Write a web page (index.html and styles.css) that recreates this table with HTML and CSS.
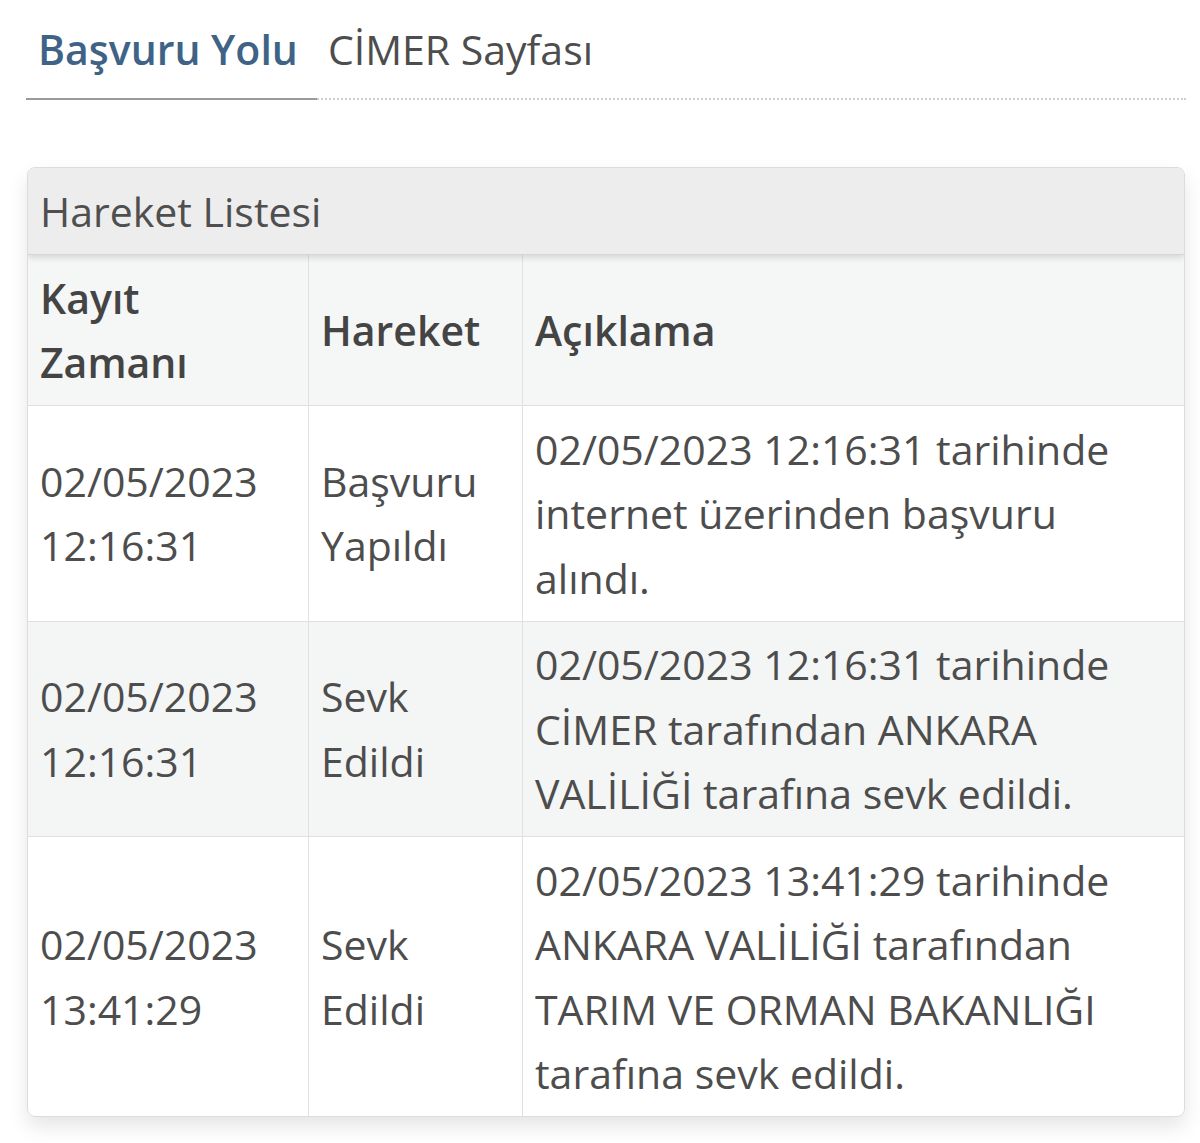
FILE: index.html
```html
<!DOCTYPE html>
<html lang="tr">
<head>
<meta charset="utf-8">
<title>Hareket Listesi</title>
<link rel="stylesheet" href="styles.css">
</head>
<body>
<div class="page">
  <ul class="tabs">
    <li class="tab active">Başvuru Yolu</li>
    <li class="tab">CİMER Sayfası</li>
  </ul>
  <div class="panel">
    <div class="panel-heading">Hareket Listesi</div>
    <table class="list">
      <thead>
        <tr>
          <th class="c1">Kayıt Zamanı</th>
          <th class="c2">Hareket</th>
          <th class="c3">Açıklama</th>
        </tr>
      </thead>
      <tbody>
        <tr>
          <td>02/05/2023 12:16:31</td>
          <td>Başvuru Yapıldı</td>
          <td>02/05/2023 12:16:31 tarihinde internet üzerinden başvuru alındı.</td>
        </tr>
        <tr class="alt">
          <td>02/05/2023 12:16:31</td>
          <td>Sevk Edildi</td>
          <td>02/05/2023 12:16:31 tarihinde CİMER tarafından ANKARA VALİLİĞİ tarafına sevk edildi.</td>
        </tr>
        <tr>
          <td>02/05/2023 13:41:29</td>
          <td>Sevk Edildi</td>
          <td>02/05/2023 13:41:29 tarihinde ANKARA VALİLİĞİ tarafından TARIM VE ORMAN BAKANLIĞI tarafına sevk edildi.</td>
        </tr>
      </tbody>
    </table>
  </div>
</div>
</body>
</html>
```

FILE: styles.css
```css
html, body {
  margin: 0;
  padding: 0;
  background: #ffffff;
}

body {
  font-family: "Open Sans", "Noto Sans", sans-serif;
  font-size: 41px;
  color: #4a4a4a;
}

.page {
  width: 1160px;
  padding: 0 0 40px 26px;
}

.tabs {
  list-style: none;
  margin: 0;
  padding: 14px 0 0 0;
  display: flex;
  border-bottom: 2px dotted #cfcfcf;
  height: 84px;
}

.tab {
  line-height: 70px;
  padding: 0 10px 0 11px;
  color: #4d4d4d;
  height: 84px;
  box-sizing: border-box;
}

.tab.active {
  color: #3f6386;
  font-weight: 600;
  padding: 0 19px 0 12px;
  border-bottom: 2px solid #9a9a9a;
  margin-bottom: -2px;
  height: 86px;
}

.panel {
  margin: 67px 0 0 1px;
  width: 1156px;
  border: 1px solid #dcdcdc;
  border-radius: 8px;
  overflow: hidden;
  box-shadow: 0 10px 20px rgba(0, 0, 0, 0.1);
}

.panel-heading {
  background: #ededed;
  line-height: 64px;
  padding: 11px 12px 11px;
  color: #4f4f4f;
  box-shadow: 0 3px 6px rgba(0, 0, 0, 0.12);
  position: relative;
  border-bottom: 1px solid #d6d6d6;
}

.list {
  width: 100%;
  border-collapse: collapse;
  font-size: 41px;
  line-height: 64.5px;
}

.list th,
.list td {
  text-align: left;
  vertical-align: middle;
  padding: 10.5px 12px;
  border: 1px solid #e0e0e0;
}

.list tr > :first-child { border-left: 0; }
.list tr > :last-child { border-right: 0; }
.list tbody tr:last-child td { border-bottom: 0; }

.list th {
  font-weight: 600;
  color: #444;
  background: #f5f6f6;
  border-top: 0;
}

.list td {
  color: #4d4d4d;
}

.list tr.alt td {
  background: #f4f5f5;
}

.c1 { width: 256px; }
.c2 { width: 189px; }
```
